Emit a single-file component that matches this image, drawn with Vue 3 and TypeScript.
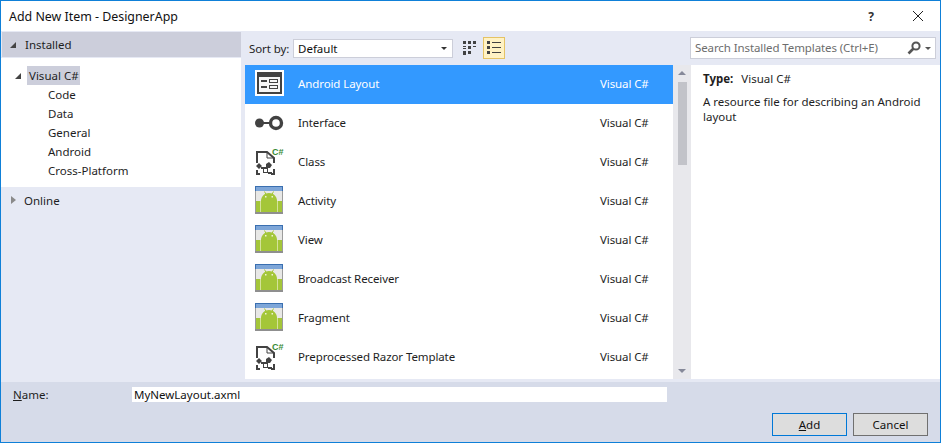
<script setup lang="ts">
interface Template {
  name: string;
  icon: 'layout' | 'iface' | 'class' | 'android';
}

const templates: Template[] = [
  { name: 'Android Layout', icon: 'layout' },
  { name: 'Interface', icon: 'iface' },
  { name: 'Class', icon: 'class' },
  { name: 'Activity', icon: 'android' },
  { name: 'View', icon: 'android' },
  { name: 'Broadcast Receiver', icon: 'android' },
  { name: 'Fragment', icon: 'android' },
  { name: 'Preprocessed Razor Template', icon: 'class' }
];

const categories = ['Code', 'Data', 'General', 'Android', 'Cross-Platform'];
</script>

<template>
  <div class="dialog">
    <header class="titlebar">
      <span class="title">Add New Item - DesignerApp</span>
      <span class="help">?</span>
      <svg class="close" width="12" height="12" viewBox="0 0 12 12">
        <path d="M1 1l10 10M11 1L1 11" stroke="#222" fill="none" />
      </svg>
    </header>

    <div class="body">
      <aside class="side">
        <div class="side-head">
          <span class="tri open"></span>
          <span>Installed</span>
        </div>
        <div class="tree">
          <div class="tree-root">
            <span class="tri open"></span>
            <span class="tree-sel">Visual C#</span>
          </div>
          <div v-for="c in categories" :key="c" class="tree-item">{{ c }}</div>
        </div>
        <div class="side-foot">
          <span class="tri closed"></span>
          <span>Online</span>
        </div>
      </aside>

      <main class="center">
        <div class="toolbar">
          <span class="sort-label">Sort by:</span>
          <div class="combo">
            <span>Default</span>
            <span class="combo-arrow"></span>
          </div>
          <svg class="grid-icon" width="14" height="14" viewBox="0 0 14 14" fill="#424242">
            <rect x="0" y="0" width="3" height="3" />
            <rect x="5" y="0" width="3" height="3" />
            <rect x="10" y="0" width="3" height="3" />
            <rect x="0" y="5" width="3" height="1" />
            <rect x="5" y="5" width="3" height="3" />
            <rect x="10" y="5" width="3" height="1" />
            <rect x="0" y="7" width="3" height="1" />
            <rect x="0" y="10" width="3" height="3" />
            <rect x="5" y="10" width="3" height="3" />
            <rect x="0" y="13" width="3" height="1" />
          </svg>
          <button class="view-btn">
            <svg width="14" height="14" viewBox="0 0 14 14" fill="#424242">
              <rect x="0" y="0" width="3" height="3" />
              <rect x="5" y="1" width="9" height="1" />
              <rect x="0" y="5" width="3" height="3" />
              <rect x="5" y="6" width="9" height="1" />
              <rect x="0" y="10" width="3" height="3" />
              <rect x="5" y="11" width="9" height="1" />
            </svg>
          </button>
        </div>

        <div class="list-wrap">
          <ul class="list">
            <li
              v-for="(t, i) in templates"
              :key="t.name"
              class="row"
              :class="{ selected: i === 0 }"
            >
              <span class="row-icon">
                <svg v-if="t.icon === 'layout'" width="29" height="26" viewBox="0 0 29 26">
                  <rect width="29" height="26" fill="#fff" />
                  <rect x="2" y="2" width="25" height="22" fill="#424242" />
                  <rect x="4" y="7" width="21" height="15" fill="#f6f6f6" />
                  <rect x="6" y="10" width="6" height="2" fill="#424242" />
                  <rect x="6" y="16" width="6" height="2" fill="#424242" />
                  <rect x="14.500" y="9.500" width="8" height="3" fill="none" stroke="#424242" />
                  <rect x="14.500" y="15.500" width="8" height="3" fill="none" stroke="#424242" />
                </svg>

                <svg v-else-if="t.icon === 'iface'" class="iface" width="29" height="16" viewBox="0 0 29 16">
                  <circle cx="4.500" cy="8" r="4.500" fill="#424242" />
                  <rect x="8" y="7" width="7" height="2" fill="#424242" />
                  <circle cx="21" cy="8" r="5.500" fill="none" stroke="#424242" stroke-width="3.400" />
                </svg>

                <svg v-else-if="t.icon === 'class'" width="29" height="28" viewBox="0 0 29 28">
                  <path d="M2 16V5h10l7 6v5" fill="none" stroke="#424242" stroke-width="2" />
                  <path d="M19 22v5h-3M2 23v4h3" fill="none" stroke="#424242" stroke-width="2" />
                  <path d="M12 5v6h7" fill="none" stroke="#424242" />
                  <path d="M1 19l3-3 3 3-3 3zM6 20h5v2H6zM11 17l3-2 3 3-2 3h-4z" fill="#424242" />
                  <rect x="8.500" y="21.500" width="4" height="4" fill="#fff" stroke="#424242" />
                  <path d="M13 25h4v2h-4z" fill="#424242" />
                  <text x="17" y="8" class="cs">C#</text>
                </svg>

                <svg v-else width="28" height="28" viewBox="0 0 28 28">
                  <rect x="0" y="0" width="28" height="28" rx="1" fill="#e8e8e6" />
                  <rect x="0" y="0" width="28" height="5" fill="#7ea6d8" />
                  <path d="M0 .5h28M.5 0v5M27.500 0v5" stroke="#3a6fb0" />
                  <path d="M.5 5v21M27.500 5v21" stroke="#9c9c9c" />
                  <path d="M1 15h26v11H1z" fill="#a4c639" />
                  <path d="M6 15c0-4.500 3.500-8 8-8s8 3.500 8 8z" fill="#a4c639" />
                  <path d="M9.500 5.500l1.500 3M18.500 5.500l-1.500 3" stroke="#a4c639" />
                  <rect x="5" y="15" width="1" height="11" fill="#d4e29a" />
                  <rect x="22" y="15" width="1" height="11" fill="#d4e29a" />
                  <rect x="10" y="10" width="1.500" height="1.500" fill="#eef3d6" />
                  <rect x="16.500" y="10" width="1.500" height="1.500" fill="#eef3d6" />
                  <rect x="0" y="26" width="28" height="2" fill="#8f8f8f" />
                </svg>
              </span>

              <span class="row-name">{{ t.name }}</span>
              <span class="row-lang">Visual C#</span>
            </li>
          </ul>

          <div class="scrollbar">
            <span class="sb-up"></span>
            <span class="sb-thumb"></span>
            <span class="sb-space"></span>
            <span class="sb-down"></span>
          </div>
        </div>
      </main>

      <section class="details">
        <div class="search-bar">
          <div class="search">
            <span class="search-text">Search Installed Templates (Ctrl+E)</span>
            <svg width="14" height="14" viewBox="0 0 14 14">
              <circle cx="9" cy="5" r="3.600" fill="none" stroke="#555" stroke-width="2" />
              <path d="M6.500 7.500L1.500 12.500" stroke="#555" stroke-width="2.600" />
            </svg>
            <span class="search-arrow"></span>
          </div>
        </div>
        <div class="info">
          <div class="type-line"><b>Type:</b><span>Visual C#</span></div>
          <p>A resource file for describing an Android layout</p>
        </div>
      </section>
    </div>

    <footer class="footer">
      <div class="name-row">
        <label class="name-label"><u>N</u>ame:</label>
        <div class="name-input">MyNewLayout.axml</div>
      </div>
      <div class="actions">
        <button class="btn primary"><u>A</u>dd</button>
        <button class="btn">Cancel</button>
      </div>
    </footer>
  </div>
</template>

<style scoped>
.dialog {
  box-sizing: border-box;
  width: 941px;
  height: 443px;
  border: 1px solid #0f80d8;
  background: #e6e9f4;
  display: flex;
  flex-direction: column;
  font-family: "Noto Sans", "Liberation Sans", sans-serif;
  font-size: 11.5px;
  color: #1e1e1e;
  overflow: hidden;
}

.titlebar {
  height: 30px;
  flex: none;
  background: #fff;
  display: flex;
  align-items: center;
  padding-left: 8px;
}

.title {
  flex: 1;
  font-size: 12.4px;
  color: #111;
}

.help {
  font-size: 12px;
  font-weight: 700;
  color: #333;
  margin-right: 38px;
}

.close {
  margin-right: 16px;
}

.body {
  flex: 1;
  min-height: 0;
  display: flex;
  padding-bottom: 3px;
}

.side {
  width: 240px;
  flex: none;
  margin-top: 1px;
}

.side-head {
  height: 25px;
  margin-left: 1px;
  background: #cccedb;
  display: flex;
  align-items: center;
  gap: 9px;
  padding-left: 8px;
}

.tree {
  margin-top: 1px;
  height: 129px;
  background: #fff;
  padding-top: 8px;
  box-sizing: border-box;
}

.tree-root {
  display: flex;
  align-items: center;
  height: 19px;
  padding-left: 14px;
  gap: 6px;
}

.tree-sel {
  background: #cccedb;
  padding: 0 2px;
  line-height: 19px;
  width: 49px;
  white-space: nowrap;
}

.tree-item {
  height: 19px;
  line-height: 19px;
  padding-left: 47px;
}

.side-foot {
  height: 26px;
  display: flex;
  align-items: center;
  gap: 8px;
  padding-left: 10px;
}

.tri {
  display: inline-block;
  width: 0;
  height: 0;
  flex: none;
}

.tri.open {
  border-style: solid;
  border-width: 0 0 6px 6px;
  border-color: transparent transparent #444 transparent;
}

.tri.closed {
  border-style: solid;
  border-width: 4px 0 4px 5px;
  border-color: transparent transparent transparent #8a8a8a;
}

.center {
  width: 446px;
  margin-left: 4px;
  flex: none;
  display: flex;
  flex-direction: column;
}

.toolbar {
  height: 34px;
  flex: none;
  display: flex;
  align-items: center;
}

.sort-label {
  box-sizing: border-box;
  width: 48px;
  padding-left: 4px;
  letter-spacing: -0.1px;
}

.combo {
  box-sizing: border-box;
  width: 160px;
  height: 19px;
  background: #fff;
  border: 1px solid #ccced9;
  display: flex;
  align-items: center;
  justify-content: space-between;
  padding: 0 5px 0 4px;
  color: #111;
}

.combo-arrow {
  border-style: solid;
  border-width: 3px 3px 0 3px;
  border-color: #333 transparent transparent transparent;
}

.grid-icon {
  margin-left: 10px;
}

.view-btn {
  box-sizing: border-box;
  width: 22px;
  height: 22px;
  margin-left: 6px;
  padding: 0;
  background: #fff2c4;
  border: 1px solid #e5c365;
  display: flex;
  align-items: center;
  justify-content: center;
}

.list-wrap {
  flex: 1;
  min-height: 0;
  display: flex;
}

.list {
  list-style: none;
  margin: 0;
  padding: 0;
  flex: 1;
  background: #fff;
}

.row {
  box-sizing: border-box;
  height: 39px;
  display: flex;
  align-items: center;
  padding: 0 0 3px 10px;
  letter-spacing: -0.1px;
}

.row.selected {
  background: #3399ff;
  color: #fff;
}

.row-icon {
  width: 43px;
  flex: none;
  display: flex;
  align-items: center;
}

.iface {
  margin-top: 2px;
}

.row-name {
  width: 302px;
  flex: none;
}

.cs {
  font-family: "Liberation Sans", sans-serif;
  font-size: 9px;
  font-weight: 700;
  letter-spacing: 0;
  fill: #388a34;
}

.scrollbar {
  width: 18px;
  flex: none;
  background: #e8e8ec;
  display: flex;
  flex-direction: column;
  align-items: center;
}

.sb-up {
  margin-top: 6px;
  border-style: solid;
  border-width: 0 4px 4px 4px;
  border-color: transparent transparent #868999 transparent;
}

.sb-thumb {
  width: 9px;
  height: 83px;
  margin-top: 7px;
  background: #c2c3c9;
}

.sb-space {
  flex: 1;
}

.sb-down {
  margin-bottom: 6px;
  border-style: solid;
  border-width: 4px 4px 0 4px;
  border-color: #868999 transparent transparent transparent;
}

.details {
  flex: 1;
  display: flex;
  flex-direction: column;
  min-width: 0;
}

.search-bar {
  height: 34px;
  flex: none;
  padding-top: 6px;
  box-sizing: border-box;
}

.search {
  box-sizing: border-box;
  width: 246px;
  height: 22px;
  background: #fff;
  border: 1px solid #ccced9;
  display: flex;
  align-items: center;
  padding: 0 4px;
  margin-left: -1px;
}

.search-text {
  flex: 1;
  color: #6d6d6d;
  letter-spacing: -0.1px;
  padding-bottom: 1px;
}

.search-arrow {
  margin-left: 4px;
  border-style: solid;
  border-width: 3px 3px 0 3px;
  border-color: #555 transparent transparent transparent;
}

.info {
  flex: 1;
  background: #fff;
  padding: 6px 12px 0 12px;
}

.type-line {
  display: flex;
  gap: 8px;
  line-height: 16px;
}

.type-line b {
  font-weight: 700;
}

.info p {
  margin: 7px 0 0;
  line-height: 15px;
}

.footer {
  height: 60px;
  flex: none;
  background: #d6dbe9;
  display: flex;
  flex-direction: column;
}

.name-row {
  display: flex;
  align-items: center;
  padding: 5px 0 0 12px;
}

.name-label {
  width: 119px;
}

.name-input {
  width: 535px;
  height: 15px;
  line-height: 15px;
  background: #fff;
  padding-left: 2px;
  box-sizing: border-box;
  color: #111;
}

.actions {
  display: flex;
  justify-content: flex-end;
  gap: 6px;
  padding: 11px 12px 0 0;
}

.btn {
  box-sizing: border-box;
  width: 75px;
  height: 23px;
  padding: 0;
  background: #dddddd;
  border: 1px solid #707070;
  font: inherit;
  color: #111;
}

.btn.primary {
  border-color: #0078d7;
}
</style>
